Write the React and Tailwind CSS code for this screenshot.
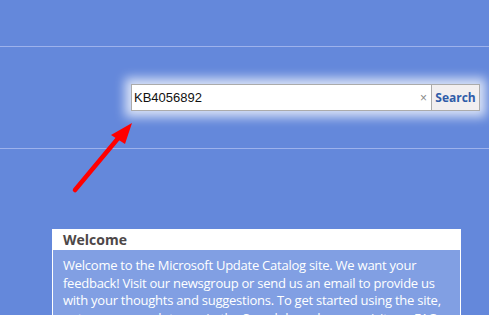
import React from 'react';

const Arrow = () => (
    <svg className="absolute left-0 top-0 pointer-events-none" width="489" height="315">
        <line x1="75" y1="190" x2="120" y2="136" stroke="#ff0000" strokeWidth="4.5" strokeLinecap="round" />
        <polygon points="132,123 111,135 125,144" fill="#ff0000" />
    </svg>
);

export default function App() {
    return (
        <div className="relative w-full h-[315px] overflow-hidden bg-[#6488db] font-['Open_Sans',sans-serif]">
            {/* top band */}
            <div className="h-[47px] border-b border-[#9db2ec]"></div>

            {/* search band */}
            <div className="h-[102px] border-b border-[#9db2ec] pl-[131px] pt-[37px]">
                <div className="flex w-[349px] h-[27px] shadow-[0_0_10px_6px_rgba(255,255,255,0.75)]">
                    <div className="flex-1 flex items-center bg-white border border-[#ababab] pl-[2px] pr-[4px]">
                        <span className="flex-1 text-[13px] text-[#111] font-['Liberation_Sans',Arial,sans-serif]">KB4056892</span>
                        <span className="text-[12px] leading-none text-[#8a8a8a] font-['Liberation_Sans',Arial,sans-serif]">×</span>
                    </div>
                    <button className="w-[48px] bg-[#f2eff0] border border-l-0 border-[#ababab] text-[12px] font-bold text-[#2f5ca8] font-['Open_Sans',sans-serif]">
                        Search
                    </button>
                </div>
            </div>

            {/* welcome box */}
            <div className="ml-[52px] mt-[80px] w-[409px] bg-[#819fe3] border border-t-0 border-white">
                <div className="bg-white h-[21px] pl-[10px] text-[14px] leading-[22px] font-bold text-[#4d4747]">
                    Welcome
                </div>
                <p className="pl-[10px] pr-[6px] pt-[7px] text-[13px] leading-[17.5px] tracking-[-0.25px] text-white">
                    Welcome to the Microsoft Update Catalog site. We want your feedback! Visit our newsgroup or send us an email to provide us with your thoughts and suggestions. To get started using the site, enter your search terms in the Search box above or visit our FAQ
                </p>
            </div>

            <Arrow />
        </div>
    );
}
